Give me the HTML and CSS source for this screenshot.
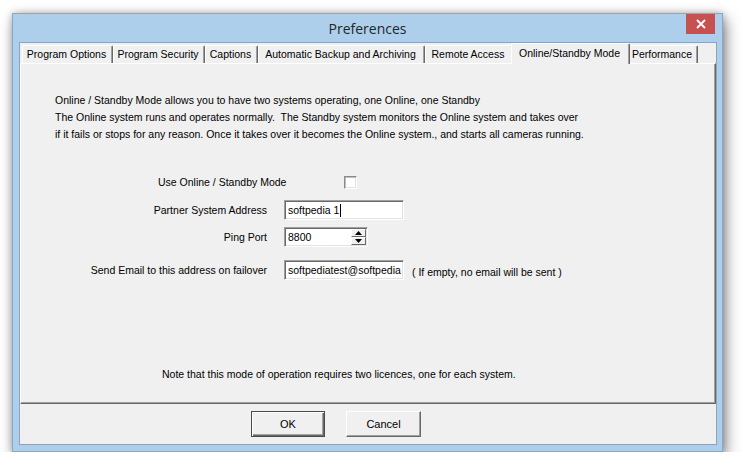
FILE: index.html
```html
<!DOCTYPE html>
<html>
<head>
<meta charset="utf-8">
<link rel="stylesheet" href="styles.css">
</head>
<body>
<div class="window">
  <div class="titlebar">
    <span class="spacer"></span>
    <span class="title">Preferences</span>
    <span class="close"><svg width="10" height="10" viewBox="0 0 10 10"><path d="M1 1 L9 9 M9 1 L1 9" stroke="#fff" stroke-width="1.8" fill="none"/></svg></span>
  </div>
  <div class="client">
    <div class="tabs">
      <div class="tab t-options">Program Options</div>
      <div class="tab t-security">Program Security</div>
      <div class="tab t-captions">Captions</div>
      <div class="tab t-backup">Automatic Backup and Archiving</div>
      <div class="tab t-remote">Remote Access</div>
      <div class="tab t-online selected">Online/Standby Mode</div>
      <div class="tab t-perf">Performance</div>
    </div>
    <div class="panel">
      <div class="desc">
        <p>Online / Standby Mode allows you to have two systems operating, one Online, one Standby</p>
        <p>The Online system runs and operates normally.&nbsp; The Standby system monitors the Online system and takes over</p>
        <p>if it fails or stops for any reason. Once it takes over it becomes the Online system., and starts all cameras running.</p>
      </div>
      <div class="row row-check">
        <span class="check-label">Use Online / Standby Mode</span>
        <span class="checkbox"></span>
      </div>
      <div class="row row-partner">
        <span class="label">Partner System Address</span>
        <div class="field wide"><span class="value">softpedia 1</span><span class="caret"></span></div>
      </div>
      <div class="row row-port">
        <span class="label">Ping Port</span>
        <div class="field spin">
          <span class="value">8800</span>
          <span class="spin-btns">
            <span class="sb"><svg width="7" height="4" viewBox="0 0 7 4"><path d="M3.5 0 L7 4 L0 4 Z" fill="#000"/></svg></span>
            <span class="sb"><svg width="7" height="4" viewBox="0 0 7 4"><path d="M0 0 L7 0 L3.5 4 Z" fill="#000"/></svg></span>
          </span>
        </div>
      </div>
      <div class="row row-email">
        <span class="label">Send Email to this address on failover</span>
        <div class="field wide"><span class="value">softpediatest@softpedia</span></div>
        <span class="hint">( If empty, no email will be sent )</span>
      </div>
      <p class="note">Note that this mode of operation requires two licences, one for each system.</p>
    </div>
    <div class="buttons">
      <button class="btn default">OK</button>
      <button class="btn">Cancel</button>
    </div>
  </div>
</div>
</body>
</html>
```
FILE: styles.css
```css
html, body {
  margin: 0;
  padding: 0;
  background: #ffffff;
}
body {
  padding: 13px 0 0 12px;
  font-family: "Liberation Sans", Arial, sans-serif;
  font-size: 10.5px;
  color: #000;
}
.window {
  box-sizing: border-box;
  width: 711px;
  height: 439px;
  background: #aecfeb;
  border: 1px solid #86a9cb;
  box-shadow: 3px 6px 14px rgba(0,0,0,0.45), 0 0 7px rgba(0,0,0,0.22);
  display: flex;
  flex-direction: column;
}
.titlebar {
  height: 28px;
  display: grid;
  grid-template-columns: 1fr auto 1fr;
  align-items: center;
}
.title {
  font-family: "Open Sans", "Noto Sans", sans-serif;
  font-size: 14px;
  color: #262626;
  padding-top: 1px;
}
.close {
  justify-self: end;
  align-self: start;
  width: 29px;
  height: 20px;
  margin-right: 7px;
  background: #c75050;
  display: flex;
  align-items: center;
  justify-content: center;
}
.client {
  box-sizing: border-box;
  height: 403px;
  margin: 0 5px 0 6px;
  background: #f0f0f0;
  border: 1px solid #8fa4bb;
  display: flex;
  flex-direction: column;
}
.tabs {
  height: 20px;
  display: flex;
  align-items: flex-end;
  padding-left: 2px;
}
.tab {
  box-sizing: border-box;
  height: 18px;
  padding: 0 2px 0 0;
  line-height: 16px;
  text-align: center;
  border-top: 1px solid #fff;
  border-left: 1px solid #fff;
  border-right: 1px solid #696969;
  box-shadow: inset -1px 0 #a0a0a0;
  border-radius: 2px 2px 0 0;
  white-space: nowrap;
}
.t-options { width: 91px; }
.t-security { width: 92px; }
.t-captions { width: 53px; }
.t-backup { width: 167px; }
.t-remote { width: 88px; }
.t-online { width: 115px; }
.t-perf { width: 70px; }
.tab.selected {
  width: 119px;
  height: 21px;
  margin: 0 -2px -1px -2px;
  line-height: 18px;
  background: #f0f0f0;
  position: relative;
  z-index: 1;
}
.panel {
  box-sizing: border-box;
  height: 341px;
  border-top: 1px solid #fff;
  border-left: 1px solid #fff;
  border-right: 1px solid #696969;
  border-bottom: 1px solid #696969;
  box-shadow: inset -1px -1px #a0a0a0;
  padding: 28px 0 0 34px;
  display: flex;
  flex-direction: column;
}
.desc p {
  margin: 0;
  line-height: 17px;
  white-space: nowrap;
}
.row {
  height: 20px;
  display: flex;
  align-items: center;
}
.row-check { margin-top: 29px; }
.row-partner { margin-top: 8px; }
.row-port { margin-top: 7px; }
.row-email { margin-top: 13px; }
.check-label {
  margin-left: 103px;
  width: 186px;
}
.checkbox {
  box-sizing: border-box;
  width: 13px;
  height: 13px;
  background: #fff;
  border: 1px solid;
  border-color: #8a8a8a #fff #fff #8a8a8a;
  box-shadow: inset 1px 1px #bdbdbd, inset -1px -1px #e3e3e3;
}
.label {
  width: 212px;
  text-align: right;
  margin-right: 17px;
  white-space: nowrap;
}
.field {
  box-sizing: border-box;
  height: 20px;
  background: #fff;
  border: 1px solid;
  border-color: #a0a0a0 #fff #fff #a0a0a0;
  box-shadow: inset 1px 1px #696969, inset -1px -1px #e3e3e3;
  padding: 0 2px 0 3px;
  display: flex;
  align-items: center;
  overflow: hidden;
  white-space: nowrap;
}
.field.wide { width: 120px; }
.field.spin {
  width: 84px;
  padding-right: 1px;
}
.field.spin .value { flex: 1; }
.caret {
  width: 1px;
  height: 13px;
  background: #000;
  margin-left: 1px;
}
.spin-btns {
  width: 15px;
  height: 16px;
  display: flex;
  flex-direction: column;
}
.sb {
  box-sizing: border-box;
  flex: 1;
  background: #f0f0f0;
  border-top: 1px solid #fff;
  border-left: 1px solid #fff;
  border-right: 1px solid #696969;
  border-bottom: 1px solid #696969;
  display: flex;
  align-items: center;
  justify-content: center;
}
.hint {
  margin-left: 8px;
  padding-top: 4px;
}
.note {
  margin: 86px 0 0 107px;
  line-height: 17px;
}
.buttons {
  display: flex;
  gap: 21px;
  padding: 7px 0 0 231px;
}
.btn {
  box-sizing: border-box;
  width: 75px;
  height: 26px;
  margin: 0;
  padding: 0;
  font-family: "Liberation Sans", Arial, sans-serif;
  font-size: 11px;
  color: #000;
  background: #f0f0f0;
  border: 1px solid;
  border-color: #fff #696969 #696969 #fff;
  box-shadow: inset -1px -1px #a0a0a0;
  border-radius: 0;
}
.btn.default {
  width: 74px;
  border: 1px solid #4a4a4a;
  box-shadow: inset 1px 1px #fff, inset -1px -1px #696969, inset -2px -2px #a0a0a0;
}
```
